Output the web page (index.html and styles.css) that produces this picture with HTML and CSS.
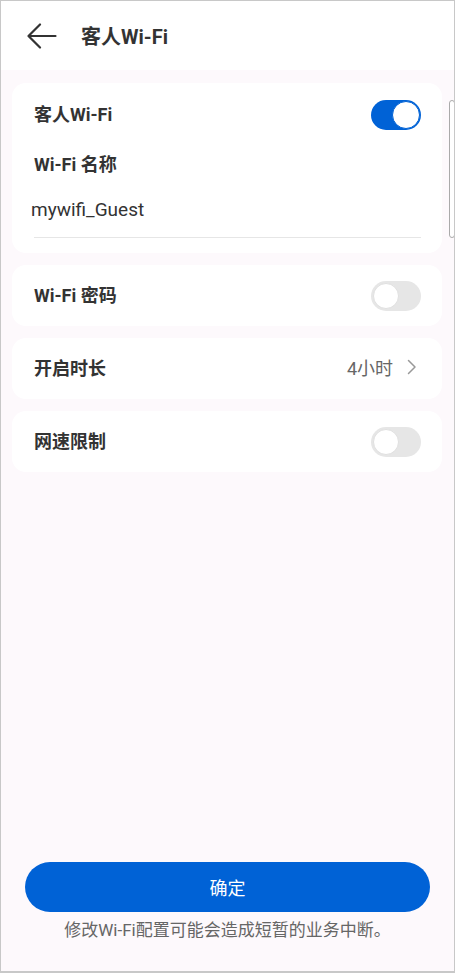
FILE: index.html
```html
<!DOCTYPE html>
<html lang="zh-CN">
<head>
<meta charset="utf-8">
<title>客人Wi-Fi</title>
<link rel="stylesheet" href="styles.css">
</head>
<body>
<div class="frame">
  <header class="topbar">
    <svg class="back" width="30" height="26" viewBox="0 0 30 26" aria-hidden="true">
      <path d="M1.5 13 H28.5 M13 1.5 L1.5 13 L13 24.5" fill="none" stroke="#333" stroke-width="2.2" stroke-linecap="round" stroke-linejoin="round"/>
    </svg>
    <h1 class="title">客人Wi-Fi</h1>
  </header>
  <main class="content">
    <section class="card card-main">
      <div class="row row-head">
        <span class="label">客人Wi-Fi</span>
        <span class="switch on"><span class="knob"></span></span>
      </div>
      <div class="field-label">Wi-Fi 名称</div>
      <div class="field-value">mywifi_Guest</div>
      <div class="divider"></div>
    </section>
    <section class="card row">
      <span class="label">Wi-Fi 密码</span>
      <span class="switch"><span class="knob"></span></span>
    </section>
    <section class="card row">
      <span class="label">开启时长</span>
      <span class="value">4小时
        <svg class="chev" width="10" height="16" viewBox="0 0 10 16" aria-hidden="true"><path d="M1.5 1.5 L8 8 L1.5 14.5" fill="none" stroke="#999" stroke-width="1.5" stroke-linecap="round" stroke-linejoin="round"/></svg>
      </span>
    </section>
    <section class="card row">
      <span class="label">网速限制</span>
      <span class="switch"><span class="knob"></span></span>
    </section>
    <div class="spacer"></div>
    <footer class="footer">
      <button class="confirm">确定</button>
      <p class="note">修改Wi-Fi配置可能会造成短暂的业务中断。</p>
    </footer>
  </main>
  <div class="scrollbar"></div>
</div>
</body>
</html>
```

FILE: styles.css
```css
* { box-sizing: border-box; }
html, body { margin: 0; padding: 0; }
body {
  font-family: Roboto, "Noto Sans CJK SC", "Noto Sans", sans-serif;
  color: #333;
  background: #fff;
}
.frame {
  position: relative;
  width: 455px;
  height: 973px;
  border: 1px solid #c8c8c8;
  border-bottom-width: 2px;
  display: flex;
  flex-direction: column;
  background: #fdf9fc;
  overflow: hidden;
}
.topbar {
  height: 69px;
  background: #fff;
  display: flex;
  align-items: center;
  padding-left: 26px;
  flex: none;
}
.back { display: block; }
.title {
  margin: 0 0 0 24px;
  font-size: 20px;
  font-weight: 700;
  color: #333;
}
.content {
  flex: 1;
  display: flex;
  flex-direction: column;
  padding: 13px 11px 0 11px;
  gap: 12px;
}
.card {
  background: #fff;
  border-radius: 14px;
  width: 430px;
}
.row {
  display: flex;
  align-items: center;
  justify-content: space-between;
  height: 61px;
  padding: 0 21px 0 22px;
}
.card-main {
  padding: 0 21px 16px 22px;
  height: 170px;
}
.row-head {
  height: 63px;
  padding: 0;
}
.label {
  font-size: 18px;
  font-weight: 700;
  color: #333;
  padding-bottom: 3px;
}
.field-label {
  font-size: 18px;
  font-weight: 700;
  margin-top: 7px;
  line-height: 24px;
}
.field-value {
  font-size: 19px;
  margin: 21px 0 0 -3px;
  line-height: 24px;
  color: #333;
}
.divider {
  height: 1px;
  background: #e6e6e6;
  margin-top: 15px;
}
.switch {
  position: relative;
  width: 50px;
  height: 30px;
  border-radius: 15px;
  background: #e6e6e6;
  display: block;
  flex: none;
}
.switch .knob {
  position: absolute;
  top: 2px;
  left: 2px;
  width: 26px;
  height: 26px;
  border-radius: 50%;
  background: #fff;
  border: 1px solid #e0e0e0;
}
.switch.on { background: #0062d6; }
.switch.on .knob {
  left: 21px;
  top: 1px;
  width: 28px;
  height: 28px;
  border: 1.5px solid #0062d6;
}
.value {
  font-size: 18px;
  color: #666;
  display: flex;
  align-items: center;
  gap: 14px;
  padding-bottom: 3px;
}
.chev { display: block; margin-right: 4px; }
.spacer { flex: 1; }
.footer {
  display: flex;
  flex-direction: column;
  align-items: center;
  padding-bottom: 30px;
}
.confirm {
  width: 405px;
  height: 50px;
  border: none;
  border-radius: 25px;
  background: #0062d6;
  color: #fff;
  font-family: inherit;
  font-size: 18px;
}
.note {
  margin: 7px 0 0;
  font-size: 17px;
  color: #666;
  line-height: 22px;
}
.scrollbar {
  position: absolute;
  right: -1px;
  top: 99px;
  width: 6px;
  height: 138px;
  border: 1px solid #aaa;
  border-radius: 4px;
  background: #fff;
}
```
